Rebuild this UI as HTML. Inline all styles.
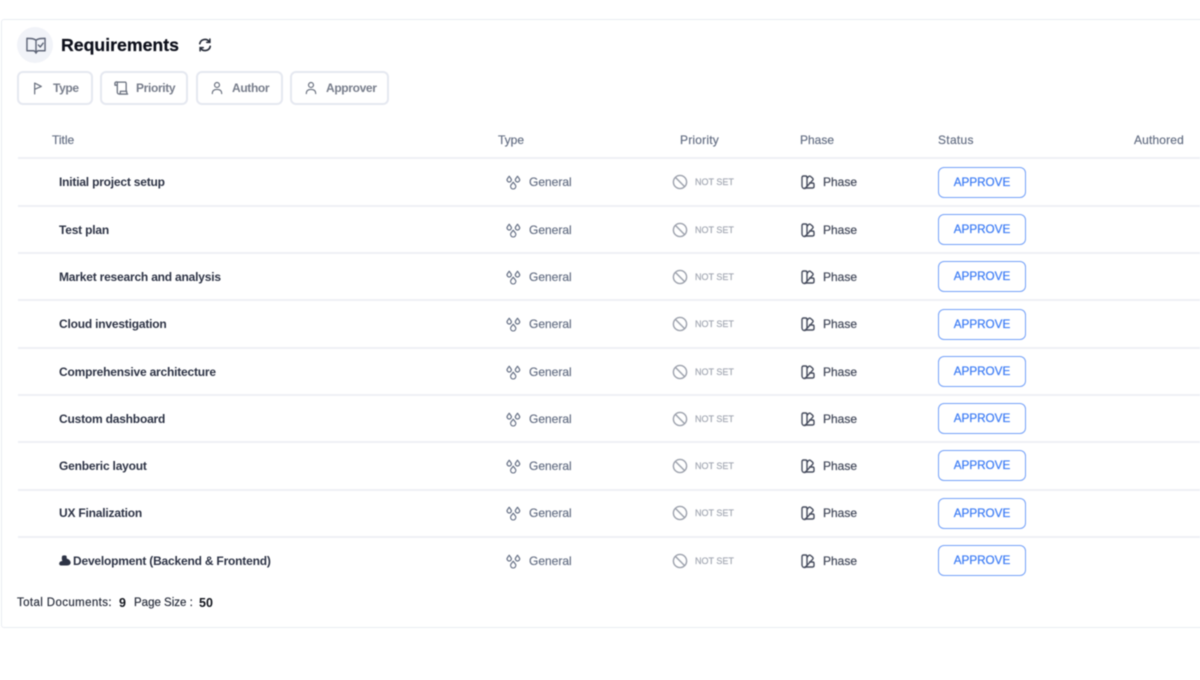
<!DOCTYPE html>
<html lang="en">
<head>
<meta charset="utf-8">
<title>Requirements</title>
<style>
html,body{margin:0;padding:0;width:1200px;height:680px;overflow:hidden;background:#fff}
body{font-family:"Liberation Sans",sans-serif;position:relative}
#w{position:absolute;left:0;top:0;width:1200px;height:680px;filter:blur(.45px)}
.card{position:absolute;left:1px;top:19px;width:1300px;height:609px;border:1px solid #e9ecf2;box-sizing:border-box;border-radius:3px}
.abs,.t,.g,.ns,.p,.b,.th{position:absolute;white-space:nowrap}
svg{position:absolute;overflow:visible;fill:none}
.icon{position:absolute;left:17px;top:27px;width:36px;height:36px;border-radius:50%;background:#f1f3f8}
h1{position:absolute;margin:0;left:61px;top:34px;font-size:17.7px;line-height:22px;font-weight:700;color:#0c0f1a;-webkit-text-stroke:.2px #0c0f1a}
.chip{position:absolute;top:71px;height:34px;box-sizing:border-box;border:2px solid #e5e8f0;border-radius:6px;font-size:12px;line-height:30px;color:#777d8b;font-weight:700;letter-spacing:-.35px}
.chip span{position:absolute;white-space:nowrap}
.th{top:133px;font-size:12px;line-height:14px;color:#667085;-webkit-text-stroke:.2px #667085}
.line{position:absolute;left:18px;width:1182px;height:2px;background:#eef0f5}
.row{position:absolute;left:0;width:1200px;height:0}
.t{left:59px;top:-8px;font-size:12px;line-height:16px;font-weight:700;color:#2d3345;letter-spacing:-.2px}
.g{left:529px;top:-8px;font-size:12px;line-height:16px;color:#667085;-webkit-text-stroke:.2px #667085}
.ns{left:695px;top:-7px;font-size:9px;line-height:14px;color:#a2a7b2;-webkit-text-stroke:.2px #a2a7b2}
.p{left:823px;top:-8px;font-size:12px;line-height:16px;color:#474d5e;-webkit-text-stroke:.25px #474d5e}
.b{left:938px;top:-15.5px;width:88px;height:31px;box-sizing:border-box;border:1.7px solid #74a1f8;border-radius:6px;text-align:center;font-size:11.7px;line-height:29px;color:#3f7ef5;-webkit-text-stroke:.25px #3f7ef5}
.ft{position:absolute;top:595.5px;font-size:11.5px;line-height:14px;color:#2a2f3d;white-space:nowrap;-webkit-text-stroke:.2px #2a2f3d}
.ftb{font-size:12.5px;font-weight:700;color:#11141c;-webkit-text-stroke:0}
</style>
</head>
<body>
<div id="w">
<div class="card"></div>
<div class="icon"></div>
<svg style="left:25.5px;top:36.5px" width="20" height="18" viewBox="0 0 21 18" stroke="#5f6678" stroke-width="1.5" stroke-linejoin="round" stroke-linecap="round"><path d="M10.5 3C9 1.5 7 1 1 1V14H7.5C9 14 10 15 10.5 16.5C11 15 12 14 13.5 14H20V1C14 1 12 1.5 10.5 3V14"/><path d="M13 8l2 2 3-4"/></svg>
<h1>Requirements</h1>
<svg style="left:198px;top:38px" width="14" height="14" viewBox="0 0 16 16" stroke="#262b38" stroke-width="1.9" stroke-linecap="round"><path d="M2 6.5A6 6 0 0 1 13 4.5"/><path d="M14 9.5A6 6 0 0 1 3 11.5"/><path d="M13.6 1.3V5H10" stroke-width="1.7"/><path d="M2.4 14.7V11H6" stroke-width="1.7"/></svg>

<div class="chip" style="left:17px;width:76px"><svg style="left:14px;top:9px" width="10" height="13" viewBox="0 0 12 15" stroke="#6b7280" stroke-width="1.5" stroke-linejoin="round" stroke-linecap="round"><path d="M2 14V1L10 5L2 8.5"/></svg><span style="left:34px">Type</span></div>
<div class="chip" style="left:100px;width:88px"><svg style="left:12px;top:8px" width="15" height="14" viewBox="0 0 16 15" stroke="#6b7280" stroke-width="1.4" stroke-linejoin="round" stroke-linecap="round"><path d="M1 2.5C1 1 3 .8 4 1.2H12C12.8 1.2 13 2 13 3V11"/><path d="M1 2.5V4.5H3.5M4 1.2C3.2 1.6 3.5 3 3.5 4.5V12C3.5 13.5 5 14 6 14H14.5C13.5 13.5 13.5 12 13.5 11H6.8C6.8 12 7 13 6 14"/></svg><span style="left:34px">Priority</span></div>
<div class="chip" style="left:196px;width:87px"><svg style="left:13px;top:8px" width="12" height="14" viewBox="0 0 14 15" stroke="#6b7280" stroke-width="1.4" stroke-linecap="round"><circle cx="7" cy="4" r="2.9"/><path d="M1.5 14C1.5 10.5 4 9.2 7 9.2S12.5 10.5 12.5 14"/></svg><span style="left:34px">Author</span></div>
<div class="chip" style="left:290px;width:99px"><svg style="left:13px;top:8px" width="12" height="14" viewBox="0 0 14 15" stroke="#6b7280" stroke-width="1.4" stroke-linecap="round"><circle cx="7" cy="4" r="2.9"/><path d="M1.5 14C1.5 10.5 4 9.2 7 9.2S12.5 10.5 12.5 14"/></svg><span style="left:34px">Approver</span></div>

<div class="th" style="left:52px">Title</div>
<div class="th" style="left:498px">Type</div>
<div class="th" style="left:680px;letter-spacing:.2px">Priority</div>
<div class="th" style="left:800px">Phase</div>
<div class="th" style="left:938px;letter-spacing:.3px">Status</div>
<div class="th" style="left:1134px;letter-spacing:.15px">Authored</div>

<div class="line" style="top:157px"></div>
<div class="line" style="top:205px"></div>
<div class="line" style="top:252px"></div>
<div class="line" style="top:299px"></div>
<div class="line" style="top:347px"></div>
<div class="line" style="top:394px"></div>
<div class="line" style="top:441px"></div>
<div class="line" style="top:489px"></div>
<div class="line" style="top:536px"></div>

<div class="row" style="top:182px"><span class="t">Initial project setup</span><svg style="left:506px;top:-7px" width="15" height="15" viewBox="0 0 15 15" stroke="#667085" stroke-width="1.2" stroke-linejoin="round"><path d="M3.2 1.2L4.9 3.6A2.1 2.1 0 1 1 1.5 3.6Z"/><path d="M11.5 1.2L13.2 3.6A2.1 2.1 0 1 1 9.8 3.6Z"/><path d="M7.2 7.2L9.2 9.7A2.6 2.6 0 1 1 5.2 9.7Z"/></svg><span class="g">General</span><svg style="left:672px;top:-8px" width="16" height="16" viewBox="0 0 16 16" stroke="#9ca1ac" stroke-width="1.4"><circle cx="8" cy="8" r="6.6"/><path d="M3.4 3.4L12.6 12.6"/></svg><span class="ns">NOT SET</span><svg style="left:801px;top:-7px" width="14" height="14" viewBox="0 0 14 14" stroke="#474d5e" stroke-width="1.4" stroke-linejoin="round"><path d="M1 2.5C1 1.5 1.6 1 2.5 1H4.5C5.5 1 6 1.5 6 2.5V11A2.5 2.5 0 0 1 1 11Z"/><path d="M6 3.5L7.5 1.6C8.2 .9 9 1 9.6 1.5L11.6 3.2C12.2 3.8 12.2 4.6 11.7 5.2L4.5 13"/><path d="M8 8H11.5C12.4 8 13 8.6 13 9.5V11.5C13 12.4 12.4 13 11.5 13H3.5"/></svg><span class="p">Phase</span><span class="b">APPROVE</span></div>

<div class="row" style="top:229.5px"><span class="t">Test plan</span><svg style="left:506px;top:-7px" width="15" height="15" viewBox="0 0 15 15" stroke="#667085" stroke-width="1.2" stroke-linejoin="round"><path d="M3.2 1.2L4.9 3.6A2.1 2.1 0 1 1 1.5 3.6Z"/><path d="M11.5 1.2L13.2 3.6A2.1 2.1 0 1 1 9.8 3.6Z"/><path d="M7.2 7.2L9.2 9.7A2.6 2.6 0 1 1 5.2 9.7Z"/></svg><span class="g">General</span><svg style="left:672px;top:-8px" width="16" height="16" viewBox="0 0 16 16" stroke="#9ca1ac" stroke-width="1.4"><circle cx="8" cy="8" r="6.6"/><path d="M3.4 3.4L12.6 12.6"/></svg><span class="ns">NOT SET</span><svg style="left:801px;top:-7px" width="14" height="14" viewBox="0 0 14 14" stroke="#474d5e" stroke-width="1.4" stroke-linejoin="round"><path d="M1 2.5C1 1.5 1.6 1 2.5 1H4.5C5.5 1 6 1.5 6 2.5V11A2.5 2.5 0 0 1 1 11Z"/><path d="M6 3.5L7.5 1.6C8.2 .9 9 1 9.6 1.5L11.6 3.2C12.2 3.8 12.2 4.6 11.7 5.2L4.5 13"/><path d="M8 8H11.5C12.4 8 13 8.6 13 9.5V11.5C13 12.4 12.4 13 11.5 13H3.5"/></svg><span class="p">Phase</span><span class="b">APPROVE</span></div>

<div class="row" style="top:276.5px"><span class="t">Market research and analysis</span><svg style="left:506px;top:-7px" width="15" height="15" viewBox="0 0 15 15" stroke="#667085" stroke-width="1.2" stroke-linejoin="round"><path d="M3.2 1.2L4.9 3.6A2.1 2.1 0 1 1 1.5 3.6Z"/><path d="M11.5 1.2L13.2 3.6A2.1 2.1 0 1 1 9.8 3.6Z"/><path d="M7.2 7.2L9.2 9.7A2.6 2.6 0 1 1 5.2 9.7Z"/></svg><span class="g">General</span><svg style="left:672px;top:-8px" width="16" height="16" viewBox="0 0 16 16" stroke="#9ca1ac" stroke-width="1.4"><circle cx="8" cy="8" r="6.6"/><path d="M3.4 3.4L12.6 12.6"/></svg><span class="ns">NOT SET</span><svg style="left:801px;top:-7px" width="14" height="14" viewBox="0 0 14 14" stroke="#474d5e" stroke-width="1.4" stroke-linejoin="round"><path d="M1 2.5C1 1.5 1.6 1 2.5 1H4.5C5.5 1 6 1.5 6 2.5V11A2.5 2.5 0 0 1 1 11Z"/><path d="M6 3.5L7.5 1.6C8.2 .9 9 1 9.6 1.5L11.6 3.2C12.2 3.8 12.2 4.6 11.7 5.2L4.5 13"/><path d="M8 8H11.5C12.4 8 13 8.6 13 9.5V11.5C13 12.4 12.4 13 11.5 13H3.5"/></svg><span class="p">Phase</span><span class="b">APPROVE</span></div>

<div class="row" style="top:324px"><span class="t">Cloud investigation</span><svg style="left:506px;top:-7px" width="15" height="15" viewBox="0 0 15 15" stroke="#667085" stroke-width="1.2" stroke-linejoin="round"><path d="M3.2 1.2L4.9 3.6A2.1 2.1 0 1 1 1.5 3.6Z"/><path d="M11.5 1.2L13.2 3.6A2.1 2.1 0 1 1 9.8 3.6Z"/><path d="M7.2 7.2L9.2 9.7A2.6 2.6 0 1 1 5.2 9.7Z"/></svg><span class="g">General</span><svg style="left:672px;top:-8px" width="16" height="16" viewBox="0 0 16 16" stroke="#9ca1ac" stroke-width="1.4"><circle cx="8" cy="8" r="6.6"/><path d="M3.4 3.4L12.6 12.6"/></svg><span class="ns">NOT SET</span><svg style="left:801px;top:-7px" width="14" height="14" viewBox="0 0 14 14" stroke="#474d5e" stroke-width="1.4" stroke-linejoin="round"><path d="M1 2.5C1 1.5 1.6 1 2.5 1H4.5C5.5 1 6 1.5 6 2.5V11A2.5 2.5 0 0 1 1 11Z"/><path d="M6 3.5L7.5 1.6C8.2 .9 9 1 9.6 1.5L11.6 3.2C12.2 3.8 12.2 4.6 11.7 5.2L4.5 13"/><path d="M8 8H11.5C12.4 8 13 8.6 13 9.5V11.5C13 12.4 12.4 13 11.5 13H3.5"/></svg><span class="p">Phase</span><span class="b">APPROVE</span></div>

<div class="row" style="top:371.5px"><span class="t">Comprehensive architecture</span><svg style="left:506px;top:-7px" width="15" height="15" viewBox="0 0 15 15" stroke="#667085" stroke-width="1.2" stroke-linejoin="round"><path d="M3.2 1.2L4.9 3.6A2.1 2.1 0 1 1 1.5 3.6Z"/><path d="M11.5 1.2L13.2 3.6A2.1 2.1 0 1 1 9.8 3.6Z"/><path d="M7.2 7.2L9.2 9.7A2.6 2.6 0 1 1 5.2 9.7Z"/></svg><span class="g">General</span><svg style="left:672px;top:-8px" width="16" height="16" viewBox="0 0 16 16" stroke="#9ca1ac" stroke-width="1.4"><circle cx="8" cy="8" r="6.6"/><path d="M3.4 3.4L12.6 12.6"/></svg><span class="ns">NOT SET</span><svg style="left:801px;top:-7px" width="14" height="14" viewBox="0 0 14 14" stroke="#474d5e" stroke-width="1.4" stroke-linejoin="round"><path d="M1 2.5C1 1.5 1.6 1 2.5 1H4.5C5.5 1 6 1.5 6 2.5V11A2.5 2.5 0 0 1 1 11Z"/><path d="M6 3.5L7.5 1.6C8.2 .9 9 1 9.6 1.5L11.6 3.2C12.2 3.8 12.2 4.6 11.7 5.2L4.5 13"/><path d="M8 8H11.5C12.4 8 13 8.6 13 9.5V11.5C13 12.4 12.4 13 11.5 13H3.5"/></svg><span class="p">Phase</span><span class="b">APPROVE</span></div>

<div class="row" style="top:418.5px"><span class="t">Custom dashboard</span><svg style="left:506px;top:-7px" width="15" height="15" viewBox="0 0 15 15" stroke="#667085" stroke-width="1.2" stroke-linejoin="round"><path d="M3.2 1.2L4.9 3.6A2.1 2.1 0 1 1 1.5 3.6Z"/><path d="M11.5 1.2L13.2 3.6A2.1 2.1 0 1 1 9.8 3.6Z"/><path d="M7.2 7.2L9.2 9.7A2.6 2.6 0 1 1 5.2 9.7Z"/></svg><span class="g">General</span><svg style="left:672px;top:-8px" width="16" height="16" viewBox="0 0 16 16" stroke="#9ca1ac" stroke-width="1.4"><circle cx="8" cy="8" r="6.6"/><path d="M3.4 3.4L12.6 12.6"/></svg><span class="ns">NOT SET</span><svg style="left:801px;top:-7px" width="14" height="14" viewBox="0 0 14 14" stroke="#474d5e" stroke-width="1.4" stroke-linejoin="round"><path d="M1 2.5C1 1.5 1.6 1 2.5 1H4.5C5.5 1 6 1.5 6 2.5V11A2.5 2.5 0 0 1 1 11Z"/><path d="M6 3.5L7.5 1.6C8.2 .9 9 1 9.6 1.5L11.6 3.2C12.2 3.8 12.2 4.6 11.7 5.2L4.5 13"/><path d="M8 8H11.5C12.4 8 13 8.6 13 9.5V11.5C13 12.4 12.4 13 11.5 13H3.5"/></svg><span class="p">Phase</span><span class="b">APPROVE</span></div>

<div class="row" style="top:465.5px"><span class="t">Genberic layout</span><svg style="left:506px;top:-7px" width="15" height="15" viewBox="0 0 15 15" stroke="#667085" stroke-width="1.2" stroke-linejoin="round"><path d="M3.2 1.2L4.9 3.6A2.1 2.1 0 1 1 1.5 3.6Z"/><path d="M11.5 1.2L13.2 3.6A2.1 2.1 0 1 1 9.8 3.6Z"/><path d="M7.2 7.2L9.2 9.7A2.6 2.6 0 1 1 5.2 9.7Z"/></svg><span class="g">General</span><svg style="left:672px;top:-8px" width="16" height="16" viewBox="0 0 16 16" stroke="#9ca1ac" stroke-width="1.4"><circle cx="8" cy="8" r="6.6"/><path d="M3.4 3.4L12.6 12.6"/></svg><span class="ns">NOT SET</span><svg style="left:801px;top:-7px" width="14" height="14" viewBox="0 0 14 14" stroke="#474d5e" stroke-width="1.4" stroke-linejoin="round"><path d="M1 2.5C1 1.5 1.6 1 2.5 1H4.5C5.5 1 6 1.5 6 2.5V11A2.5 2.5 0 0 1 1 11Z"/><path d="M6 3.5L7.5 1.6C8.2 .9 9 1 9.6 1.5L11.6 3.2C12.2 3.8 12.2 4.6 11.7 5.2L4.5 13"/><path d="M8 8H11.5C12.4 8 13 8.6 13 9.5V11.5C13 12.4 12.4 13 11.5 13H3.5"/></svg><span class="p">Phase</span><span class="b">APPROVE</span></div>

<div class="row" style="top:513px"><span class="t">UX Finalization</span><svg style="left:506px;top:-7px" width="15" height="15" viewBox="0 0 15 15" stroke="#667085" stroke-width="1.2" stroke-linejoin="round"><path d="M3.2 1.2L4.9 3.6A2.1 2.1 0 1 1 1.5 3.6Z"/><path d="M11.5 1.2L13.2 3.6A2.1 2.1 0 1 1 9.8 3.6Z"/><path d="M7.2 7.2L9.2 9.7A2.6 2.6 0 1 1 5.2 9.7Z"/></svg><span class="g">General</span><svg style="left:672px;top:-8px" width="16" height="16" viewBox="0 0 16 16" stroke="#9ca1ac" stroke-width="1.4"><circle cx="8" cy="8" r="6.6"/><path d="M3.4 3.4L12.6 12.6"/></svg><span class="ns">NOT SET</span><svg style="left:801px;top:-7px" width="14" height="14" viewBox="0 0 14 14" stroke="#474d5e" stroke-width="1.4" stroke-linejoin="round"><path d="M1 2.5C1 1.5 1.6 1 2.5 1H4.5C5.5 1 6 1.5 6 2.5V11A2.5 2.5 0 0 1 1 11Z"/><path d="M6 3.5L7.5 1.6C8.2 .9 9 1 9.6 1.5L11.6 3.2C12.2 3.8 12.2 4.6 11.7 5.2L4.5 13"/><path d="M8 8H11.5C12.4 8 13 8.6 13 9.5V11.5C13 12.4 12.4 13 11.5 13H3.5"/></svg><span class="p">Phase</span><span class="b">APPROVE</span></div>

<div class="row" style="top:560.5px"><svg style="left:59px;top:-6px" width="12" height="11" viewBox="0 0 12 11"><path d="M3 1.5C3 .4 6 0 7 .6C8 1.2 7.6 3 7.8 3.6C9 3.8 11 5 11.6 7C12 9 10.5 10.5 8 10.5H2.5C.8 10.5 -.2 9.5 .3 8C.8 6.5 2 6 3.4 6C2.8 5 2.6 3 3 1.5Z" fill="#2d3345"/></svg><span class="t" style="left:73px">Development (Backend &amp; Frontend)</span><svg style="left:506px;top:-7px" width="15" height="15" viewBox="0 0 15 15" stroke="#667085" stroke-width="1.2" stroke-linejoin="round"><path d="M3.2 1.2L4.9 3.6A2.1 2.1 0 1 1 1.5 3.6Z"/><path d="M11.5 1.2L13.2 3.6A2.1 2.1 0 1 1 9.8 3.6Z"/><path d="M7.2 7.2L9.2 9.7A2.6 2.6 0 1 1 5.2 9.7Z"/></svg><span class="g">General</span><svg style="left:672px;top:-8px" width="16" height="16" viewBox="0 0 16 16" stroke="#9ca1ac" stroke-width="1.4"><circle cx="8" cy="8" r="6.6"/><path d="M3.4 3.4L12.6 12.6"/></svg><span class="ns">NOT SET</span><svg style="left:801px;top:-7px" width="14" height="14" viewBox="0 0 14 14" stroke="#474d5e" stroke-width="1.4" stroke-linejoin="round"><path d="M1 2.5C1 1.5 1.6 1 2.5 1H4.5C5.5 1 6 1.5 6 2.5V11A2.5 2.5 0 0 1 1 11Z"/><path d="M6 3.5L7.5 1.6C8.2 .9 9 1 9.6 1.5L11.6 3.2C12.2 3.8 12.2 4.6 11.7 5.2L4.5 13"/><path d="M8 8H11.5C12.4 8 13 8.6 13 9.5V11.5C13 12.4 12.4 13 11.5 13H3.5"/></svg><span class="p">Phase</span><span class="b">APPROVE</span></div>

<div class="ft" style="left:17px;letter-spacing:.38px">Total Documents:</div>
<div class="ft ftb" style="left:119px">9</div>
<div class="ft" style="left:134px">Page Size :</div>
<div class="ft ftb" style="left:199px">50</div>
</div>
</body>
</html>
